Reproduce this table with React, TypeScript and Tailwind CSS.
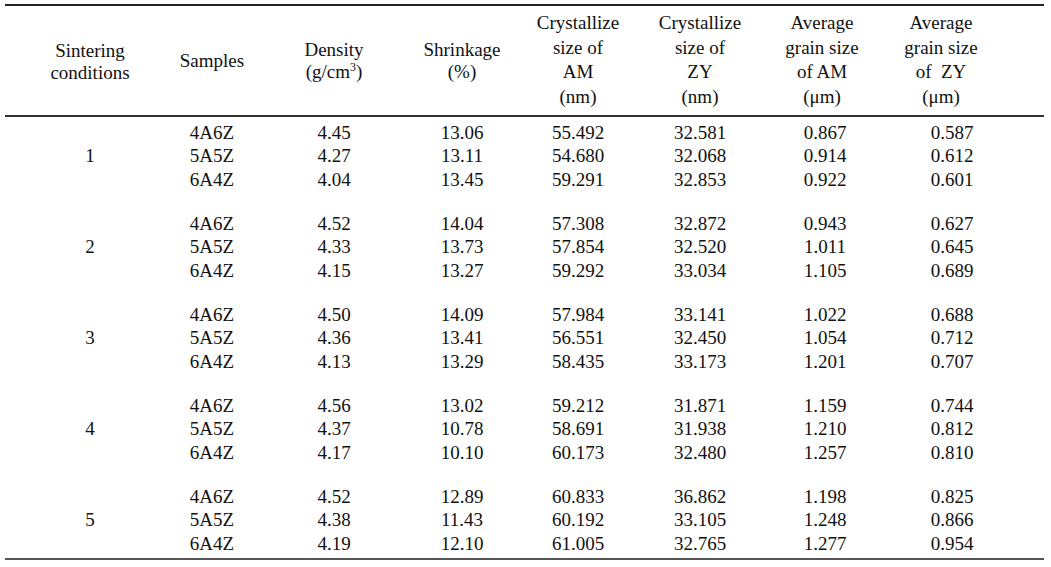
const headers: { lines: React.ReactNode[]; shift?: string }[] = [
  { lines: ["Sintering", "conditions"], shift: "pt-[3px]" },
  { lines: ["Samples"], shift: "pt-[2px]" },
  {
    lines: [
      "Density",
      <span key="u">
        (g/cm<sup className="text-[12px] relative -top-[7px]">3</sup>)
      </span>,
    ],
    shift: "pt-[2px]",
  },
  { lines: ["Shrinkage", "(%)"], shift: "pl-[12px] pt-[2px]" },
  { lines: ["Crystallize", "size of", "AM", "(nm)"] },
  { lines: ["Crystallize", "size of", "ZY", "(nm)"] },
  { lines: ["Average", "grain size", "of AM", "(μm)"] },
  { lines: ["Average", "grain size", "of  ZY", "(μm)"], shift: "pr-[6px]" },
];

const groups = [
  {
    id: "1",
    rows: [
      ["4A6Z", "4.45", "13.06", "55.492", "32.581", "0.867", "0.587"],
      ["5A5Z", "4.27", "13.11", "54.680", "32.068", "0.914", "0.612"],
      ["6A4Z", "4.04", "13.45", "59.291", "32.853", "0.922", "0.601"],
    ],
  },
  {
    id: "2",
    rows: [
      ["4A6Z", "4.52", "14.04", "57.308", "32.872", "0.943", "0.627"],
      ["5A5Z", "4.33", "13.73", "57.854", "32.520", "1.011", "0.645"],
      ["6A4Z", "4.15", "13.27", "59.292", "33.034", "1.105", "0.689"],
    ],
  },
  {
    id: "3",
    rows: [
      ["4A6Z", "4.50", "14.09", "57.984", "33.141", "1.022", "0.688"],
      ["5A5Z", "4.36", "13.41", "56.551", "32.450", "1.054", "0.712"],
      ["6A4Z", "4.13", "13.29", "58.435", "33.173", "1.201", "0.707"],
    ],
  },
  {
    id: "4",
    rows: [
      ["4A6Z", "4.56", "13.02", "59.212", "31.871", "1.159", "0.744"],
      ["5A5Z", "4.37", "10.78", "58.691", "31.938", "1.210", "0.812"],
      ["6A4Z", "4.17", "10.10", "60.173", "32.480", "1.257", "0.810"],
    ],
  },
  {
    id: "5",
    rows: [
      ["4A6Z", "4.52", "12.89", "60.833", "36.862", "1.198", "0.825"],
      ["5A5Z", "4.38", "11.43", "60.192", "33.105", "1.248", "0.866"],
      ["6A4Z", "4.19", "12.10", "61.005", "32.765", "1.277", "0.954"],
    ],
  },
];

// data columns sit a little off the header centres in the source table
const dataShift = ["", "", "pl-[12px]", "", "", "pl-[6px]", "pl-[16px]"];

export default function App() {
  return (
    <div className="w-[1051px] h-[567px] bg-white text-[#111] font-['Liberation_Serif','Times_New_Roman',serif] text-[19px] pt-[4px] pl-[5px]">
      <div className="w-[1039px]">
        <div className="h-[1.5px] bg-[#222]" />
        <div className="h-[109px] grid grid-cols-[repeat(8,122px)] pl-[24px] items-center">
          {headers.map((h, i) => (
            <div
              key={i}
              className={`text-center ${h.lines.length > 2 ? "leading-[24.5px]" : "leading-[22px]"} ${h.shift ?? ""}`}
            >
              {h.lines.map((l, j) => (
                <div key={j} className="whitespace-pre">
                  {l}
                </div>
              ))}
            </div>
          ))}
        </div>
        <div className="h-[2px] bg-[#333]" />
        <div className="flex flex-col gap-[20.5px] pt-[4px] pb-[3px] leading-[23.5px]">
          {groups.map((g) => (
            <div key={g.id} className="grid grid-cols-[repeat(8,122px)] pl-[24px]">
              <div className="flex items-center justify-center">{g.id}</div>
              {[0, 1, 2, 3, 4, 5, 6].map((c) => (
                <div key={c} className={`flex flex-col items-center ${dataShift[c]}`}>
                  {g.rows.map((r, k) => (
                    <div key={k}>{r[c]}</div>
                  ))}
                </div>
              ))}
            </div>
          ))}
        </div>
        <div className="h-[2px] bg-[#555]" />
      </div>
    </div>
  );
}
